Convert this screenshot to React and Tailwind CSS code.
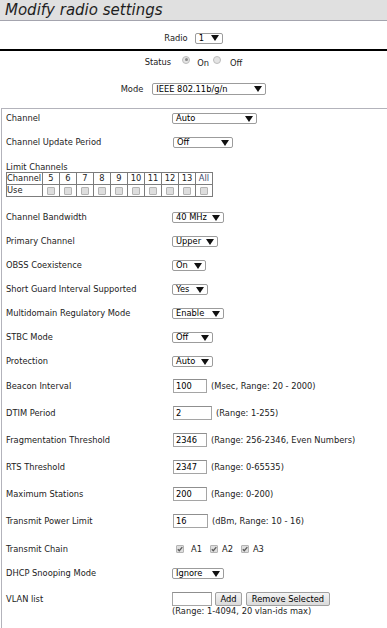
const Arrow = () => (
  <svg width="8" height="6" viewBox="0 0 8 6" className="shrink-0">
    <path d="M0 0h8L4 6z" fill="#111" />
  </svg>
)

function Select({ value, className }) {
  return (
    <div className={`flex shrink-0 items-center justify-between rounded-[2px] border border-[#9c9c9c] bg-white pl-[3px] pr-[3px] leading-none text-black ${className}`}>
      <span>{value}</span>
      <Arrow />
    </div>
  )
}

function Input({ value, className }) {
  return (
    <div className={`h-[14px] shrink-0 border border-[#a5a5a5] border-t-[#8f8f8f] bg-white pl-[2px] leading-[12px] text-black ${className}`}>
      {value}
    </div>
  )
}

function Box({ checked }) {
  return (
    <span className="flex h-[8px] w-[8px] shrink-0 items-center justify-center rounded-[1px] border border-[#b4b4b4] bg-[#dedede]">
      {checked && (
        <svg width="6" height="6" viewBox="0 0 6 6">
          <path d="M0.8 3.2L2.3 4.7L5.3 1.2" stroke="#5a5a5a" strokeWidth="1.3" fill="none" />
        </svg>
      )}
    </span>
  )
}

function Radio({ checked }) {
  return (
    <span className="flex h-[8px] w-[8px] shrink-0 items-center justify-center rounded-full border border-[#bdbdbd] bg-[#e4e4e4]">
      {checked && <span className="h-[3px] w-[3px] rounded-full bg-[#8a8a8a]" />}
    </span>
  )
}

function Row({ label, className, children }) {
  return (
    <div className={`flex items-center ${className}`}>
      <div className="w-[166px] shrink-0 leading-none">{label}</div>
      <div className="flex items-center">{children}</div>
    </div>
  )
}

const Hint = ({ children }) => <span className="ml-[4px] leading-none">{children}</span>

const channels = ['5', '6', '7', '8', '9', '10', '11', '12', '13', 'All']

export default function App() {
  return (
    <div className="min-h-[628px] w-[387px] overflow-hidden bg-white font-['DejaVu_Sans',sans-serif] text-[8.3px] text-[#222]">
      {/* title bar */}
      <div className="h-[21px] border-b border-[#a4a4ae] bg-[#e0e0e0] pl-[5px] text-[15px] italic leading-[20px] text-[#1e1e1e]">
        Modify radio settings
      </div>

      {/* radio selector */}
      <div className="mt-[11px] flex h-[12px] items-center justify-center gap-[7px]">
        <span className="leading-none">Radio</span>
        <Select value="1" className="h-[11px] w-[28px]" />
      </div>

      <div className="mt-[5px] h-[2px] bg-black" />

      {/* status */}
      <div className="mt-[5px] flex h-[12px] items-center justify-center">
        <span className="leading-none">Status</span>
        <span className="mb-[5px] ml-[11px]"><Radio checked /></span>
        <span className="ml-[7px] mt-[3px] leading-none">On</span>
        <span className="mb-[5px] ml-[4px]"><Radio /></span>
        <span className="ml-[9px] mt-[3px] leading-none">Off</span>
      </div>

      {/* mode */}
      <div className="mt-[15px] flex h-[12px] items-center justify-center gap-[9px]">
        <span className="leading-none">Mode</span>
        <Select value="IEEE 802.11b/g/n" className="h-[12px] w-[114px]" />
      </div>

      {/* settings box */}
      <div className="ml-[1px] mt-[13px] border-l border-t border-[#b3b3bb] pb-[20px] pl-[4px]">
        <Row label="Channel" className="mt-[4px] h-[11px]">
          <Select value="Auto" className="h-[11px] w-[85px]" />
        </Row>
        <Row label="Channel Update Period" className="mt-[13px] h-[11px]">
          <Select value="Off" className="ml-[1px] h-[11px] w-[60px]" />
        </Row>

        <div className="mt-[14px] h-[10px] leading-[10px]">Limit Channels</div>
        <div className="grid w-max grid-cols-[36px_repeat(10,17px)] border-l border-t border-[#7c7c7c]">
          <div className="flex h-[12px] items-center border-b border-r border-[#7c7c7c] leading-none">Channel</div>
          {channels.map((c) => (
            <div
              key={c}
              className={`flex h-[12px] items-center justify-center border-b border-r border-[#7c7c7c] leading-none ${c === 'All' ? 'text-[#3d4a6b]' : ''}`}
            >
              {c}
            </div>
          ))}
          <div className="flex h-[12px] items-center border-b border-r border-[#7c7c7c] leading-none">Use</div>
          {channels.map((c) => (
            <div key={c} className="flex h-[12px] items-center justify-center border-b border-r border-[#7c7c7c]">
              <Box />
            </div>
          ))}
        </div>

        <Row label="Channel Bandwidth" className="mt-[15px] h-[11px]">
          <Select value="40 MHz" className="h-[11px] w-[52px]" />
        </Row>
        <Row label="Primary Channel" className="mt-[13px] h-[11px]">
          <Select value="Upper" className="h-[11px] w-[46px]" />
        </Row>
        <Row label="OBSS Coexistence" className="mt-[13px] h-[11px]">
          <Select value="On" className="h-[11px] w-[34px]" />
        </Row>
        <Row label="Short Guard Interval Supported" className="mt-[13px] h-[11px]">
          <Select value="Yes" className="h-[11px] w-[36px]" />
        </Row>
        <Row label="Multidomain Regulatory Mode" className="mt-[13px] h-[11px]">
          <Select value="Enable" className="h-[11px] w-[52px]" />
        </Row>
        <Row label="STBC Mode" className="mt-[13px] h-[11px]">
          <Select value="Off" className="h-[11px] w-[41px]" />
        </Row>
        <Row label="Protection" className="mt-[13px] h-[11px]">
          <Select value="Auto" className="h-[11px] w-[41px]" />
        </Row>

        <Row label="Beacon Interval" className="mt-[12px] h-[14px]">
          <Input value="100" className="ml-[1px] w-[34px]" />
          <Hint>(Msec, Range: 20 - 2000)</Hint>
        </Row>
        <Row label="DTIM Period" className="mt-[13px] h-[14px]">
          <Input value="2" className="ml-[1px] w-[39px]" />
          <Hint>(Range: 1-255)</Hint>
        </Row>
        <Row label="Fragmentation Threshold" className="mt-[13px] h-[14px]">
          <Input value="2346" className="ml-[1px] w-[34px]" />
          <Hint>(Range: 256-2346, Even Numbers)</Hint>
        </Row>
        <Row label="RTS Threshold" className="mt-[13px] h-[14px]">
          <Input value="2347" className="ml-[1px] w-[34px]" />
          <Hint>(Range: 0-65535)</Hint>
        </Row>
        <Row label="Maximum Stations" className="mt-[13px] h-[14px]">
          <Input value="200" className="ml-[1px] w-[34px]" />
          <Hint>(Range: 0-200)</Hint>
        </Row>
        <Row label="Transmit Power Limit" className="mt-[13px] h-[14px]">
          <Input value="16" className="ml-[1px] w-[35px]" />
          <Hint>(dBm, Range: 10 - 16)</Hint>
        </Row>

        <Row label="Transmit Chain" className="mt-[15px] h-[12px]">
          <span className="ml-[4px]"><Box checked /></span>
          <span className="ml-[7px] leading-none">A1</span>
          <span className="ml-[8px]"><Box checked /></span>
          <span className="ml-[4px] leading-none">A2</span>
          <span className="ml-[8px]"><Box checked /></span>
          <span className="ml-[4px] leading-none">A3</span>
        </Row>
        <Row label="DHCP Snooping Mode" className="mt-[13px] h-[11px]">
          <Select value="Ignore" className="h-[11px] w-[52px]" />
        </Row>
        <Row label="VLAN list" className="mt-[13px] h-[14px]">
          <Input value="" className="w-[40px]" />
          <button className="ml-[3px] h-[14px] w-[27px] rounded-[2px] border border-[#a0a0a0] bg-linear-to-b from-[#f4f4f4] to-[#dadada] leading-none text-black">
            Add
          </button>
          <button className="ml-[4px] h-[14px] w-[84px] rounded-[2px] border border-[#a0a0a0] bg-linear-to-b from-[#f4f4f4] to-[#dadada] leading-none text-black">
            Remove Selected
          </button>
        </Row>
        <div className="h-[10px] pl-[166px] leading-[10px]">(Range: 1-4094, 20 vlan-ids max)</div>
      </div>
    </div>
  )
}
